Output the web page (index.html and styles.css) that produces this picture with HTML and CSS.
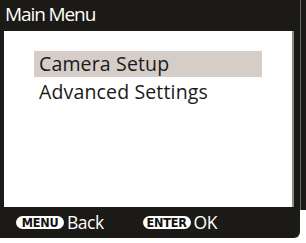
FILE: index.html
```html
<!DOCTYPE html>
<html>
<head>
<meta charset="utf-8">
<link rel="stylesheet" href="styles.css">
</head>
<body>
<div class="device">
  <div class="screen">
    <div class="title">Main Menu</div>
    <div class="panel">
      <ul class="menu">
        <li class="item selected">Camera Setup</li>
        <li class="item">Advanced Settings</li>
      </ul>
    </div>
    <div class="footer">
      <div class="hint"><span class="key">MENU</span><span class="label">Back</span></div>
      <div class="hint"><span class="key">ENTER</span><span class="label">OK</span></div>
    </div>
  </div>
  <div class="side"></div>
</div>
</body>
</html>
```

FILE: styles.css
```css
html, body {
  margin: 0;
  padding: 0;
  background: #ffffff;
}
body {
  width: 306px;
  height: 243px;
  overflow: hidden;
  font-family: "Open Sans", "Noto Sans", sans-serif;
}
.device {
  display: flex;
  align-items: flex-start;
}
.screen {
  width: 300px;
  height: 238px;
  background: #1b1a17;
  border-bottom-right-radius: 6px;
  display: flex;
  flex-direction: column;
  box-sizing: border-box;
  padding: 0 0 0 4px;
}
.side {
  width: 6px;
  height: 210px;
  background: #1b1a17;
  border-left: 1px solid #6a6a6a;
  box-sizing: border-box;
}
.title {
  height: 31px;
  color: #ffffff;
  font-size: 19px;
  line-height: 28px;
  padding-left: 1px;
  letter-spacing: -1.1px;
}
.panel {
  width: 288px;
  height: 176px;
  background: #ffffff;
  border-right: 2px solid #8a8a8a;
  box-sizing: content-box;
}
.menu {
  list-style: none;
  margin: 0;
  padding: 20px 0 0 30px;
}
.item {
  width: 228px;
  height: 26px;
  line-height: 26px;
  font-size: 19.5px;
  letter-spacing: 0.15px;
  color: #1a1a1a;
  padding-left: 5px;
  box-sizing: border-box;
  margin-bottom: 1.5px;
}
.item.selected {
  background: #d5cdc8;
}
.footer {
  display: flex;
  align-items: center;
  height: 30px;
  padding-left: 12px;
  gap: 39px;
}
.hint {
  display: flex;
  align-items: center;
  gap: 3px;
}
.key {
  width: 48px;
  text-align: center;
  background: #ffffff;
  color: #111111;
  font-family: "DejaVu Sans Condensed", "Liberation Sans Narrow", sans-serif;
  font-stretch: condensed;
  font-weight: bold;
  font-size: 12.5px;
  letter-spacing: -0.2px;
  height: 13px;
  line-height: 13px;
  border-radius: 7px;
}
.label {
  color: #ffffff;
  font-size: 17.5px;
  line-height: 20px;
  letter-spacing: -0.5px;
}
```
